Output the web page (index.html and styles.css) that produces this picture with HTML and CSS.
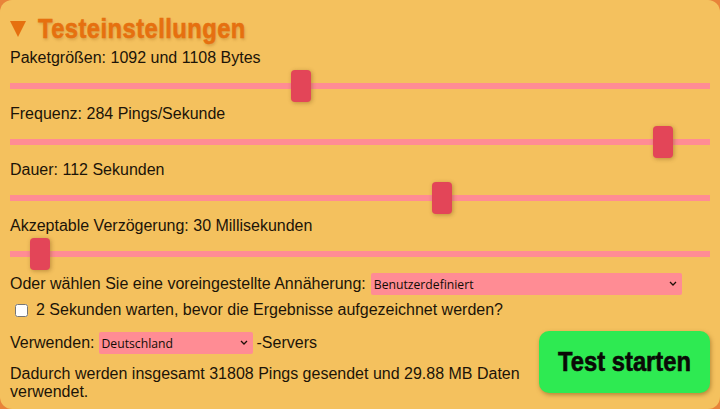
FILE: index.html
```html
<!DOCTYPE html>
<html lang="de">
<head>
  <meta charset="UTF-8">
  <meta name="viewport" content="width=device-width, initial-scale=1.0">
  <title>Testeinstellungen</title>
  <link rel="stylesheet" href="styles.css">
</head>
<body>

  <section class="panel">
    <h2 class="panel-title"><span class="arrow"></span><span class="title-text">Testeinstellungen</span></h2>

    <div class="setting">
      <label>Paketgrößen: 1092 und 1108 Bytes</label>
      <input type="range" min="0" max="1000" value="413">
    </div>
    <div class="setting">
      <label>Frequenz: 284 Pings/Sekunde</label>
      <input type="range" min="0" max="1000" value="946">
    </div>
    <div class="setting">
      <label>Dauer: 112 Sekunden</label>
      <input type="range" min="0" max="1000" value="621">
    </div>
    <div class="setting">
      <label>Akzeptable Verzögerung: 30 Millisekunden</label>
      <input type="range" min="0" max="1000" value="30">
    </div>

    <div class="preset">
      Oder wählen Sie eine voreingestellte Annäherung:
      <select class="preset-select">
        <option>Benutzerdefiniert</option>
      </select>
    </div>

    <label class="wait">
      <input type="checkbox">
      2 Sekunden warten, bevor die Ergebnisse aufgezeichnet werden?
    </label>

    <div class="bottom">
      <div class="bottom-text">
        <div class="server">
          Verwenden:
          <select class="server-select">
            <option>Deutschland</option>
          </select>
          -Servers
        </div>
        <p class="summary">Dadurch werden insgesamt 31808 Pings gesendet und 29.88 MB Daten verwendet.</p>
      </div>
      <button class="start"><span class="start-text">Test starten</span></button>
    </div>
  </section>

</body>
</html>
```

FILE: styles.css
```css
* { box-sizing: border-box; }

html, body {
  margin: 0;
  height: 409px;
  overflow: hidden;
  background: #e8833a;
}

body {
  font-family: "Liberation Sans", Arial, sans-serif;
  font-size: 16px;
  color: #1c1408;
}

.panel {
  height: 409px;
  padding: 12px 10px 0;
  background: #f4c15e;
  border-radius: 12px;
}

.panel-title {
  display: flex;
  align-items: center;
  height: 34px;
  margin: 0;
  font-family: "Liberation Sans", sans-serif;
  font-size: 28px;
  font-weight: 700;
  color: #e6700f;
  text-shadow: 1px 2px 3px rgba(150, 90, 20, 0.3);
}

.arrow {
  flex: none;
  width: 0;
  height: 0;
  margin-right: 12px;
  border-left: 8px solid transparent;
  border-right: 8px solid transparent;
  border-top: 16px solid #e6700f;
}

.title-text {
  display: inline-block;
  transform: scaleX(0.85);
  transform-origin: left center;
  letter-spacing: 0.5px;
  -webkit-text-stroke: 0.6px #e6700f;
}

.setting {
  height: 56px;
  padding-top: 2px;
}

.setting label {
  display: block;
  height: 20px;
  line-height: 20px;
}

.setting input[type=range] {
  display: block;
  width: 700px;
  height: 32px;
  margin: 2px 0 0;
  background: transparent;
  -webkit-appearance: none;
  appearance: none;
}

.setting input[type=range]::-webkit-slider-runnable-track {
  height: 6px;
  background: #ff8c94;
}

.setting input[type=range]::-webkit-slider-thumb {
  -webkit-appearance: none;
  width: 20px;
  height: 32px;
  margin-top: -13px;
  background: #e34558;
  border-radius: 4px;
  box-shadow: 1px 1px 4px rgba(120, 80, 20, 0.45);
}

.preset {
  display: flex;
  align-items: center;
  gap: 5px;
  height: 22px;
  margin-top: 3px;
}

select {
  height: 22px;
  padding: 0 0 0 3px;
  border: none;
  border-radius: 2px;
  background-color: #ff8c94;
  background-image: url("data:image/svg+xml,%3Csvg xmlns='http://www.w3.org/2000/svg' width='8' height='6'%3E%3Cpath d='M1 1l3 3 3-3' fill='none' stroke='%23201008' stroke-width='1.3'/%3E%3C/svg%3E");
  background-repeat: no-repeat;
  background-position: right 5px center;
  color: #120c04;
  font-family: "Open Sans", "Noto Sans", sans-serif;
  font-size: 12.2px;
  -webkit-appearance: none;
  appearance: none;
}

.preset-select { width: 311px; }
.server-select { width: 154px; }

.wait {
  display: flex;
  align-items: center;
  height: 24px;
  margin: 3px 0 0 5px;
}

.wait input {
  width: 13px;
  height: 13px;
  margin: 0 8px 0 0;
}

.bottom {
  display: flex;
  justify-content: space-between;
  margin-top: 8px;
}

.bottom-text { width: 520px; }

.server {
  display: flex;
  align-items: center;
  gap: 4px;
  height: 24px;
  margin-top: 1px;
}

.summary {
  margin: 10px 0 0;
  line-height: 18px;
}

.start {
  width: 171px;
  height: 62px;
  margin-top: 1px;
  padding: 0;
  border: none;
  border-radius: 10px;
  background: #2eea52;
  color: #0a0a06;
  font-family: "Liberation Sans", sans-serif;
  font-size: 27px;
  font-weight: 700;
  box-shadow: 1px 2px 4px rgba(120, 80, 20, 0.5);
}

.start-text {
  display: inline-block;
  white-space: nowrap;
  transform: scaleX(0.88);
  -webkit-text-stroke: 0.6px #0a0a06;
}
```
